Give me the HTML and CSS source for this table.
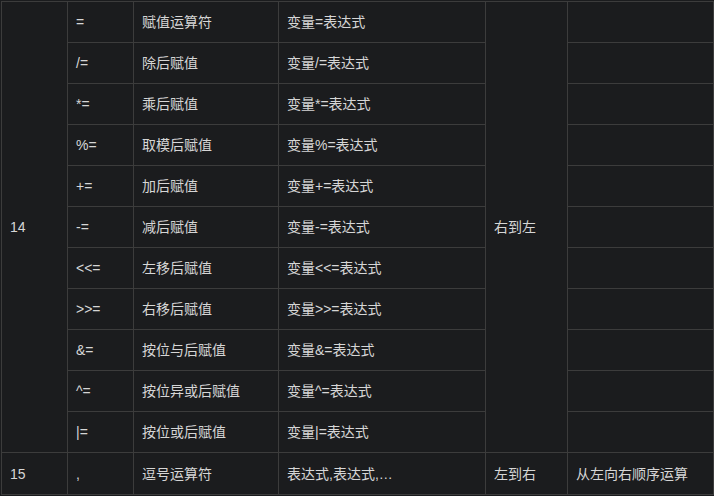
FILE: index.html
```html
<!DOCTYPE html>
<html lang="zh">
<head>
<meta charset="utf-8">
<link rel="stylesheet" href="styles.css">
</head>
<body>
<table class="ops">
  <colgroup>
    <col class="c1"><col class="c2"><col class="c3"><col class="c4"><col class="c5"><col class="c6">
  </colgroup>
  <tbody>
    <tr><td rowspan="11">14</td><td>=</td><td>赋值运算符</td><td>变量=表达式</td><td rowspan="11">右到左</td><td></td></tr>
    <tr><td>/=</td><td>除后赋值</td><td>变量/=表达式</td><td></td></tr>
    <tr><td>*=</td><td>乘后赋值</td><td>变量*=表达式</td><td></td></tr>
    <tr><td>%=</td><td>取模后赋值</td><td>变量%=表达式</td><td></td></tr>
    <tr><td>+=</td><td>加后赋值</td><td>变量+=表达式</td><td></td></tr>
    <tr><td>-=</td><td>减后赋值</td><td>变量-=表达式</td><td></td></tr>
    <tr><td>&lt;&lt;=</td><td>左移后赋值</td><td>变量&lt;&lt;=表达式</td><td></td></tr>
    <tr><td>&gt;&gt;=</td><td>右移后赋值</td><td>变量&gt;&gt;=表达式</td><td></td></tr>
    <tr><td>&amp;=</td><td>按位与后赋值</td><td>变量&amp;=表达式</td><td></td></tr>
    <tr><td>^=</td><td>按位异或后赋值</td><td>变量^=表达式</td><td></td></tr>
    <tr><td>|=</td><td>按位或后赋值</td><td>变量|=表达式</td><td></td></tr>
    <tr class="last"><td>15</td><td>,</td><td>逗号运算符</td><td>表达式,表达式,…</td><td>左到右</td><td>从左向右顺序运算</td></tr>
  </tbody>
</table>
</body>
</html>
```
FILE: styles.css
```css
html, body {
  margin: 0;
  background: #1b1c1e;
}
body {
  padding: 1px;
  font-family: "Liberation Sans", Arial, "Noto Sans CJK SC", sans-serif;
  font-size: 14px;
  color: #d6d6d6;
}
.ops {
  border-collapse: collapse;
  table-layout: fixed;
  width: 712px;
}
.c1 { width: 66px; }
.c2 { width: 66px; }
.c3 { width: 145px; }
.c4 { width: 207px; }
.c5 { width: 82px; }
.c6 { width: 146px; }
.ops td {
  border: 1px solid #3c3c3c;
  height: 40px;
  padding: 0 8px;
  box-sizing: border-box;
  vertical-align: middle;
  white-space: nowrap;
  overflow: hidden;
  line-height: 20px;
}
.ops tr {
  height: 41px;
}
.ops tr.last {
  height: 42px;
}
```
